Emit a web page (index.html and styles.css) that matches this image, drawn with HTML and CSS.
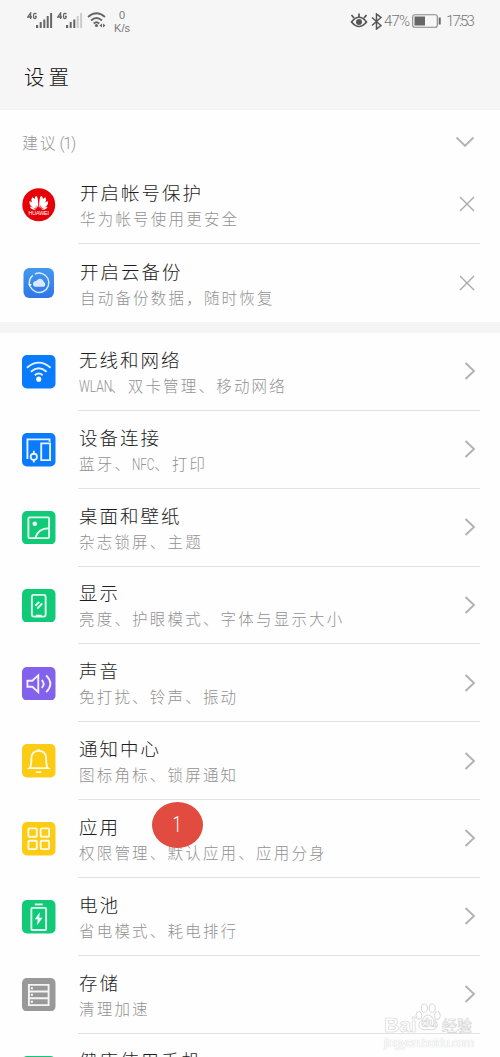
FILE: index.html
```html
<!DOCTYPE html>
<html lang="zh-CN">
<head>
<meta charset="utf-8">
<title>设置</title>
<link rel="stylesheet" href="styles.css">
</head>
<body>
<div class="screen">
<header class="top">
  <div class="status">
    <div class="status-left">
      <svg width="26" height="18" viewBox="0 0 26 18"><g fill="none" stroke="#666" stroke-width="1.300"><path d="M3.600 7V1L.8 5H5M9.400 2.200Q8.800 1.200 7.600 1.400Q6.400 1.600 6.500 4Q6.500 6.600 7.800 6.600Q9.200 6.600 9.200 4.300H8"/></g><path fill="#666" d="M9 13h2.200v3H9zM12.700 10h2v6h-2zM16.300 7.500h2V16h-2zM19.700 4h2v12h-2zM23.100 1h2v15h-2z"/></svg>
      <svg class="sig2" width="26" height="18" viewBox="0 0 26 18"><g fill="none" stroke="#666" stroke-width="1.300"><path d="M3.600 7V1L.8 5H5M9.400 2.200Q8.800 1.200 7.600 1.400Q6.400 1.600 6.500 4Q6.500 6.600 7.800 6.600Q9.200 6.600 9.200 4.300H8"/></g><path fill="#666" d="M9 13h2.200v3H9zM12.700 10h2v6h-2zM16.300 7.500h2V16h-2z"/><path fill="#ccc" d="M19.700 4h2v12h-2zM23.100 1h2v15h-2z"/></svg>
      <svg class="wifi" width="20" height="16" viewBox="0 0 20 16"><g fill="none" stroke="#666" stroke-width="1.800"><path d="M1 5Q9.500-2.500 18 5M4 8.500Q9.500 3.500 15 8.500M6.700 11.500Q9.500 9 12.300 11.500"/></g><circle cx="9.500" cy="13.500" r="1.600" fill="#666"/><path fill="#666" d="M15 11.500v4l-2.500-2zM16 11.500v4l2.500-2z"/></svg>
      <div class="speed"><span>0</span><span>K/s</span></div>
    </div>
    <div class="status-right">
      <svg width="18" height="16" viewBox="0 0 18 16"><g fill="none" stroke="#555" stroke-width="1.700"><path d="M1.500 9Q9-.5 16.500 9Q9 18 1.500 9zM9 4V.5M4 5L1.500 2M14 5l2.500-3"/></g><circle cx="9" cy="9" r="3" fill="#555"/></svg>
      <svg class="bt" width="11" height="17" viewBox="0 0 11 17"><path d="M1 4.500l9 8L5.500 16V1L10 4.500l-9 8" fill="none" stroke="#555" stroke-width="1.500"/></svg>
      <span class="pct">47%</span>
      <svg class="bat" width="29" height="14" viewBox="0 0 29 14"><rect x=".7" y=".7" width="24.600" height="12.600" rx="2" fill="none" stroke="#888" stroke-width="1.100"/><path fill="#666" d="M2.500 2.500H13v9H2.500zM26.700 3.500h2v7h-2z"/></svg>
      <span class="clock">17:53</span>
    </div>
  </div>
  <h1>设置</h1>
</header>

<section class="tips">
  <div class="tips-head"><span>建议<span class="count">(1)</span></span><svg width="20" height="12" viewBox="0 0 20 12"><path d="M1.500 1.500L10 9.800l8.500-8.300" fill="none" stroke="#b5b5b5" stroke-width="1.900"/></svg></div>
  <div class="tip">
    <svg class="icon" viewBox="0 0 34 34"><circle cx="17" cy="17" r="16.700" fill="#e60008"/><g fill="#fff"><path d="M16.500 20Q11 12 13.600 8.500Q16.600 6 16.500 20zM17.500 20Q23 12 20.400 8.500Q17.400 6 17.500 20zM15.400 20.500Q7.500 14 10.300 9.500Q13.500 10 15.400 20.500zM18.600 20.500Q26.500 14 23.700 9.500Q20.500 10 18.600 20.500zM14.700 21Q7 19.500 7.500 13.500Q11 13.500 14.700 21zM19.300 21Q27 19.500 26.500 13.500Q23 13.500 19.300 21zM14 22Q9.500 22.500 8 19Q11 18.500 14 22zM20 22q4.500.5 6-3q-3-.5-6 3z"/></g><text x="6.500" y="27.700" class="brand" textLength="21">HUAWEI</text></svg>
    <div class="body"><div class="text"><b>开启帐号保护</b><small>华为帐号使用更安全</small></div>
    <svg class="close" width="16" height="16" viewBox="0 0 16 16"><path d="M1 1l14 14M15 1L1 15"/></svg></div>
  </div>
  <div class="tip">
    <svg class="icon" viewBox="0 0 34 34"><defs><linearGradient id="sky" x2="0" y2="1"><stop stop-color="#4399ed"/><stop offset="1" stop-color="#2f76e8"/></linearGradient></defs><rect x="1.500" y="2" width="31" height="30.500" rx="6" fill="url(#sky)"/><path d="M13 8.300A9.800 9.800 0 1 1 8.500 21M7.600 18.500A9.800 9.800 0 0 1 11 9.500" fill="none" stroke="#d9eafe" stroke-width="1.500"/><path d="M6.300 18l3.600.5-2 3z" fill="#fff"/><path d="M13 21a3 3 0 0 1 0-5.500q1-.3 1.500-.2a4 4 0 0 1 6.500-1q1 1 1 2a2.500 2.500 0 0 1 0 4.700z" fill="#d9eafe"/></svg>
    <div class="body"><div class="text"><b>开启云备份</b><small>自动备份数据，随时恢复</small></div>
    <svg class="close" width="16" height="16" viewBox="0 0 16 16"><path d="M1 1l14 14M15 1L1 15"/></svg></div>
  </div>
</section>

<main class="list">
  <div class="row">
    <svg class="icon line" viewBox="0 0 34 34"><rect class="blue" width="34" height="34" rx="5"/><path d="M5 13Q17 2.500 29 13M9 17Q17 10 25 17M13 20.500Q17 17 21 20.500"/><circle class="dot" cx="17" cy="24.500" r="2.600"/></svg>
    <div class="body"><div class="text"><b>无线和网络</b><small><i class="wlan">WLAN</i>、双卡管理、移动网络</small></div><svg class="go" viewBox="0 0 12 20"><path d="M1.500 2L10 10l-8.500 8"/></svg></div>
  </div>
  <div class="row">
    <svg class="icon line" viewBox="0 0 34 34"><rect class="blue" width="34" height="34" rx="5"/><path d="M5.500 26.500V6.500H28V9M19.500 10.500h9v17h-9zM19 27.500h10M12 18v3.500M12 27v3"/><circle cx="12" cy="24.200" r="3.200"/></svg>
    <div class="body"><div class="text"><b>设备连接</b><small>蓝牙、<i class="nfc">NFC</i>、打印</small></div><svg class="go" viewBox="0 0 12 20"><path d="M1.500 2L10 10l-8.500 8"/></svg></div>
  </div>
  <div class="row">
    <svg class="icon line" viewBox="0 0 34 34"><rect class="green" width="34" height="34" rx="5"/><rect x="6.500" y="6.500" width="21" height="21" rx="1"/><path d="M13.500 27.500Q16 17.500 27.500 17.500"/><circle class="dot" cx="13" cy="13" r="2.300"/></svg>
    <div class="body"><div class="text"><b>桌面和壁纸</b><small>杂志锁屏、主题</small></div><svg class="go" viewBox="0 0 12 20"><path d="M1.500 2L10 10l-8.500 8"/></svg></div>
  </div>
  <div class="row">
    <svg class="icon line" viewBox="0 0 34 34"><rect class="green" width="34" height="34" rx="5"/><rect x="10" y="6" width="14" height="22" rx="2"/><path d="M13.500 17l4-4M15.500 20l5-5.500M14 27h6"/></svg>
    <div class="body"><div class="text"><b>显示</b><small>亮度、护眼模式、字体与显示大小</small></div><svg class="go" viewBox="0 0 12 20"><path d="M1.500 2L10 10l-8.500 8"/></svg></div>
  </div>
  <div class="row">
    <svg class="icon line" viewBox="0 0 34 34"><rect class="purple" width="34" height="34" rx="5"/><path d="M5.500 14h5l6-5.500v17l-6-5.500h-5zM20 13.200Q24 17 20 21.300M24.500 8.500Q33 17 24.500 25.500"/></svg>
    <div class="body"><div class="text"><b>声音</b><small>免打扰、铃声、振动</small></div><svg class="go" viewBox="0 0 12 20"><path d="M1.500 2L10 10l-8.500 8"/></svg></div>
  </div>
  <div class="row">
    <svg class="icon line" viewBox="0 0 34 34"><rect class="yellow" width="34" height="34" rx="5"/><path d="M7.500 24.500Q9.500 23 9.500 15Q9.500 7 17 7T24.500 15Q24.500 23 26.500 24.500zM17 7V5M14.500 28.500h5"/></svg>
    <div class="body"><div class="text"><b>通知中心</b><small>图标角标、锁屏通知</small></div><svg class="go" viewBox="0 0 12 20"><path d="M1.500 2L10 10l-8.500 8"/></svg></div>
  </div>
  <div class="row">
    <svg class="icon line" viewBox="0 0 34 34"><rect class="yellow" width="34" height="34" rx="5"/><rect x="6.500" y="6.500" width="8.500" height="8.500" rx="1"/><rect x="19" y="6.500" width="8.500" height="8.500" rx="1"/><rect x="6.500" y="19" width="8.500" height="8.500" rx="1"/><rect x="19" y="19" width="8.500" height="8.500" rx="1"/></svg>
    <div class="body"><div class="text"><b>应用</b><small>权限管理、默认应用、应用分身</small></div><svg class="go" viewBox="0 0 12 20"><path d="M1.500 2L10 10l-8.500 8"/></svg></div>
    <span class="marker"><span>1</span></span>
  </div>
  <div class="row">
    <svg class="icon line" viewBox="0 0 34 34"><rect class="green" width="34" height="34" rx="5"/><rect x="9.500" y="8" width="15" height="22.500" rx="1"/><path d="M13 4.500h8"/><path class="dot" d="M18 12.500l-5 7h3l-.7 6 5.500-7.500h-3.300z"/></svg>
    <div class="body"><div class="text"><b>电池</b><small>省电模式、耗电排行</small></div><svg class="go" viewBox="0 0 12 20"><path d="M1.500 2L10 10l-8.500 8"/></svg></div>
  </div>
  <div class="row">
    <svg class="icon line" viewBox="0 0 34 34"><rect class="gray" width="34" height="34" rx="5"/><path d="M7 7h20v20.500H7zM7 13.700h20M7 20.500h20"/><path class="dot" d="M9 9.500h2v2H9zM9 16h2v2H9zM9 23h2v2H9z"/></svg>
    <div class="body"><div class="text"><b>存储</b><small>清理加速</small></div><svg class="go" viewBox="0 0 12 20"><path d="M1.500 2L10 10l-8.500 8"/></svg></div>
  </div>
  <div class="row last">
    <svg class="icon line" viewBox="0 0 34 34"><rect class="green" width="34" height="34" rx="5"/></svg>
    <div class="body"><div class="text"><b>健康使用手机</b></div></div>
  </div>
</main>

<div class="watermark">
  <div class="wm-name"><span class="bai">Bai</span><span class="exp">经验</span></div>
  <svg class="paw" width="26" height="29" viewBox="0 0 25 28"><ellipse cx="3.800" cy="12" rx="2.800" ry="3.800"/><ellipse cx="9" cy="5" rx="2.900" ry="4"/><ellipse cx="16.500" cy="5" rx="2.900" ry="4"/><ellipse cx="21.500" cy="12" rx="2.800" ry="3.800"/><path d="M12.500 11.500Q15.500 11.500 17.500 15.500Q22.500 19 21 23Q19 27 12.500 25.500Q6 27 4 23Q2.500 19 7.500 15.500Q9.500 11.500 12.500 11.500z"/><text x="6" y="23.500">du</text></svg>
  <div class="wm-url">jingyan.baidu.com</div>
</div>
</div>
</body>
</html>
```
FILE: styles.css
```css
* { box-sizing: border-box; }
body {
  margin: 0;
  background: #fefefe;
  font-family: "Noto Sans CJK SC", sans-serif;
  font-weight: 300;
}
.screen {
  position: relative;
  width: 500px;
  height: 1057px;
  overflow: hidden;
}
svg { display: block; flex: none; }
.top {
  height: 110px;
  background: #f6f6f6;
  border-bottom: 1px solid #f3f3f3;
}
.status {
  display: flex;
  justify-content: space-between;
  height: 42px;
  padding: 0 27px;
  color: #777;
}
.status-left { display: flex; padding-top: 12px; }
.sig2 { margin-left: 4px; }
.wifi { margin-left: 4px; }
.speed {
  display: flex;
  flex-direction: column;
  align-items: center;
  width: 20px;
  margin: -3px 0 0 5px;
  font: 11px/13px "Liberation Sans", sans-serif;
}
.status-right { display: flex; align-items: center; }
.bt { margin-left: 3px; }
.pct, .clock {
  font: 300 15px/20px Roboto, sans-serif;
  letter-spacing: -.8px;
  white-space: nowrap;
}
.pct { width: 27px; margin-left: 2px; }
.bat { margin-left: 1px; }
.clock { width: 27px; margin-left: 5px; letter-spacing: -1.900px; }
h1 {
  margin: 15px 0 0 24px;
  font-size: 20.500px;
  line-height: 38px;
  font-weight: 300;
  letter-spacing: 4px;
  color: #111;
}
.tips {
  height: 223px;
  border-bottom: 11px solid #f4f4f4;
}
.tips-head {
  display: flex;
  justify-content: space-between;
  align-items: center;
  height: 56px;
  padding: 8px 25px 0 22px;
  font-size: 16px;
  letter-spacing: 1.700px;
  color: #999;
}
.count { letter-spacing: -1.200px; margin-left: 2px; font-family: Roboto, sans-serif; }
.tip, .row {
  position: relative;
  display: flex;
  align-items: center;
  padding-left: 22px;
  height: 77.850px;
}
.icon { width: 33.500px; height: 33.500px; }
.body {
  display: flex;
  align-items: center;
  justify-content: space-between;
  flex: 1;
  height: 100%;
  margin: 0 20px 0 22.500px;
  border-bottom: 1px solid #e2e2e2;
}
.tip:last-child .body { border-bottom: 0; }
.text { padding: 1px 0 0 1px; white-space: nowrap; }
.tip .text { padding: 2px 0 0 2px; }
.text b, .text small { display: block; font-weight: 300; }
.text b {
  font-size: 18.500px;
  line-height: 27px;
  letter-spacing: 2px;
  color: #1c1c1c;
}
.text small {
  font-size: 15.500px;
  line-height: 25px;
  letter-spacing: 2.200px;
  color: #929292;
}
.last .body { align-items: flex-start; padding-top: 12px; }
.close { margin-right: 5px; fill: none; stroke: #aaa; stroke-width: 1.400; }
.go { width: 12px; height: 20px; margin-right: 4px; fill: none; stroke: #b2b2b2; stroke-width: 1.900; }
.text i {
  display: inline-block;
  font: 300 16px/20px Roboto, sans-serif;
  letter-spacing: 0;
  transform-origin: left;
}
.wlan { width: 31px; transform: scaleX(.75); }
.nfc { width: 22px; transform: scaleX(.73); }
.brand { font: 5.500px "Liberation Sans", sans-serif; fill: #fff; }
.line { fill: none; stroke: #fff; stroke-width: 1.900; stroke-opacity: .9; }
.line .dot { fill: #fff; stroke: none; }
.line .blue { fill: #0a7bfb; stroke: none; }
.line .green { fill: #10ca78; stroke: none; }
.line .purple { fill: #8262ed; stroke: none; }
.line .yellow { fill: #fccb14; stroke: none; }
.line .gray { fill: #999; stroke: none; }
.marker {
  position: absolute;
  left: 152px;
  top: 2px;
  width: 51px;
  height: 46px;
  border-radius: 50%;
  background: #e14b40;
  color: #fff;
  font: 300 22px/46px Roboto, sans-serif;
  text-align: center;
}
.marker span { display: inline-block; transform: scaleX(.75); }
.watermark {
  position: absolute;
  left: 384px;
  top: 1002px;
  width: 92px;
  height: 48px;
  color: #fff;
}
.paw {
  position: absolute;
  left: 31px;
  top: 1px;
  fill: #fff;
  stroke: #d4d4d4;
  stroke-width: .9;
}
.paw text { font: bold 12px "Liberation Sans", sans-serif; stroke-width: .7; }
.wm-name {
  display: flex;
  justify-content: space-between;
  align-items: center;
  height: 32px;
  padding: 13px 4px 0 0;
  font: bold 21px/20px "Liberation Sans", sans-serif;
  -webkit-text-stroke: .6px #d4d4d4;
}
.exp { font: 500 15px/20px "Noto Sans CJK SC", sans-serif; }
.wm-url {
  font: 13px/17px "Liberation Sans", sans-serif;
  letter-spacing: -.9px;
  text-shadow: 0 0 1px #bbb;
}
```
